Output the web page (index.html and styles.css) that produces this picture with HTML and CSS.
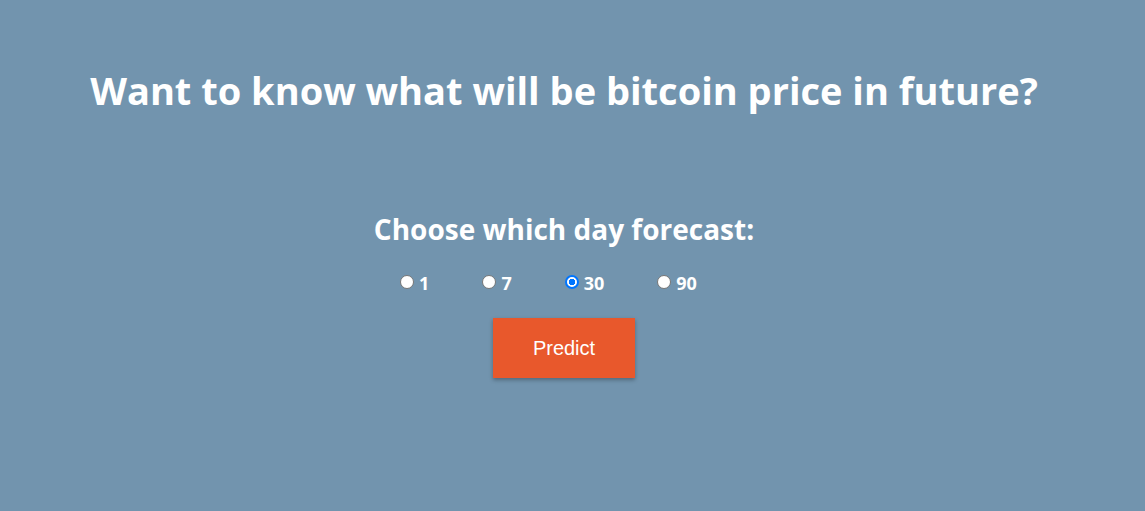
FILE: index.html
```html
<!DOCTYPE html>
<html>
<head>
<meta charset="utf-8">
<link rel="stylesheet" href="styles.css">
</head>
<body>
<div class="page">
  <h1 class="title">Want to know what will be bitcoin price in future?</h1>
  <form class="form">
    <h2 class="subtitle">Choose which day forecast:</h2>
    <div class="options">
      <label class="opt"><input type="radio" name="days" value="1">1</label>
      <label class="opt"><input type="radio" name="days" value="7">7</label>
      <label class="opt"><input type="radio" name="days" value="30" checked>30</label>
      <label class="opt"><input type="radio" name="days" value="90">90</label>
    </div>
    <button type="button" class="btn">Predict</button>
  </form>
</div>
</body>
</html>
```
FILE: styles.css
```css
html, body {
  margin: 0;
  padding: 0;
  background: #7294ae;
  height: 100%;
}
.page {
  margin-right: 17px;
  display: flex;
  flex-direction: column;
  align-items: center;
  font-family: "Open Sans", "DejaVu Sans", sans-serif;
  color: #ffffff;
}
.title {
  margin: 65px 0 0;
  font-size: 38px;
  font-weight: 700;
  line-height: 50px;
}
.form {
  display: flex;
  flex-direction: column;
  align-items: center;
  margin-top: 96px;
}
.subtitle {
  margin: 0;
  font-size: 28px;
  font-weight: 700;
  line-height: 36px;
}
.options {
  display: flex;
  margin-top: 25px;
  padding-right: 31px;
  gap: 53px;
  font-size: 18px;
  font-weight: 700;
  line-height: 22px;
}
.opt {
  display: flex;
  align-items: center;
}
.opt input {
  appearance: none;
  -webkit-appearance: none;
  flex: 0 0 auto;
  box-sizing: border-box;
  width: 14px;
  height: 14px;
  margin: 0 5px 3px 0;
  border: 1px solid #767676;
  border-radius: 50%;
  background: #ffffff;
}
.opt input:checked {
  border: 2px solid #0075ff;
  background: radial-gradient(circle, #0075ff 0 3px, #ffffff 3.5px);
}
.btn {
  margin-top: 24px;
  width: 142px;
  height: 60px;
  background: #e8582c;
  color: #ffffff;
  border: none;
  font-family: "Liberation Sans", Arial, sans-serif;
  font-size: 20px;
  box-shadow: 0 2px 4px rgba(0, 0, 0, 0.3);
}
```
